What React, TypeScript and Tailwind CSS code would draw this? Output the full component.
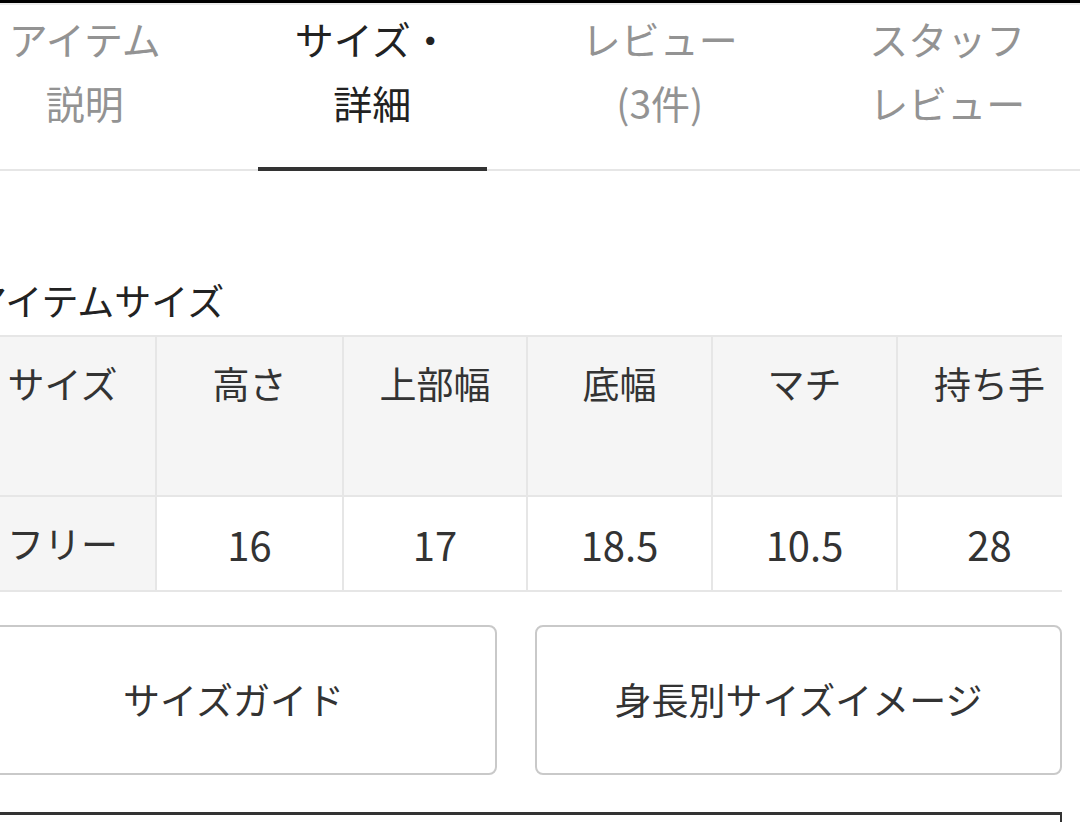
const FONT = "font-['Noto_Sans_CJK_JP','Noto_Sans',sans-serif]";

const tabs = [
  { lines: ["アイテム", "説明"], active: false },
  { lines: ["サイズ・", "詳細"], active: true },
  { lines: ["レビュー", "(3件)"], active: false },
  { lines: ["スタッフ", "レビュー"], active: false },
];

const headers = ["サイズ", "高さ", "上部幅", "底幅", "マチ", "持ち手"];
const values = ["フリー", "16", "17", "18.5", "10.5", "28"];
const widths = ["w-[185px]", "w-[187px]", "w-[184px]", "w-[185px]", "w-[185px]", "w-[185px]"];

export default function App() {
  return (
    <div className={`w-[1080px] h-[822px] overflow-hidden bg-white text-[#333] ${FONT}`}>
      <div className="h-[3px] bg-black" />
      <div className="h-[2px] bg-[#ececec]" />

      {/* Tabs */}
      <div className="ml-[-59px] w-[1150px] grid grid-cols-4 border-b-2 border-[#e6e6e6]">
        {tabs.map((t) => (
          <div
            key={t.lines.join("")}
            className={`relative h-[164px] pt-px flex flex-col items-center text-[39px] leading-[64px] ${
              t.active ? "text-[#222]" : "text-[#939393]"
            }`}
          >
            {t.lines.map((l) => (
              <span key={l}>{l}</span>
            ))}
            {t.active && <span className="absolute bottom-[-2px] left-[29px] right-[29px] h-[4px] bg-[#333]" />}
          </div>
        ))}
      </div>

      {/* Size section */}
      <div className="ml-[-30px] w-[1092px]">
        <h2 className="mt-[107px] mb-[13px] text-[37px] leading-[44px] font-normal text-[#222]">アイテムサイズ</h2>

        <div className="overflow-hidden">
          <div className="w-[1111px] border-t-2 border-b-2 border-[#e6e6e6]">
            <div className="flex h-[158px] bg-[#f5f5f5]">
              {headers.map((h, i) => (
                <div
                  key={h}
                  className={`${widths[i]} shrink-0 pt-[24px] text-center text-[37px] leading-[44px] ${
                    i > 0 ? "border-l-2 border-[#e6e6e6]" : ""
                  }`}
                >
                  {h}
                </div>
              ))}
            </div>
            <div className="flex h-[95px] border-t-2 border-[#e6e6e6]">
              {values.map((v, i) => (
                <div
                  key={v}
                  className={`${widths[i]} shrink-0 flex items-center justify-center ${
                    i === 0 ? "bg-[#f5f5f5] text-[37px]" : "bg-white border-l-2 border-[#e6e6e6] text-[40px]"
                  }`}
                >
                  {v}
                </div>
              ))}
            </div>
          </div>
        </div>

        <div className="mt-[33px] grid grid-cols-2 gap-[38px]">
          <button className="h-[150px] rounded-[8px] border-2 border-[#c9c9c9] bg-white text-[37px] text-[#333]">
            サイズガイド
          </button>
          <button className="h-[150px] rounded-[8px] border-2 border-[#c9c9c9] bg-white text-[37px] text-[#333]">
            身長別サイズイメージ
          </button>
        </div>

        <div className="mt-[37px] h-[60px] border-t-[3px] border-r-2 border-[#333]" />
      </div>
    </div>
  );
}
